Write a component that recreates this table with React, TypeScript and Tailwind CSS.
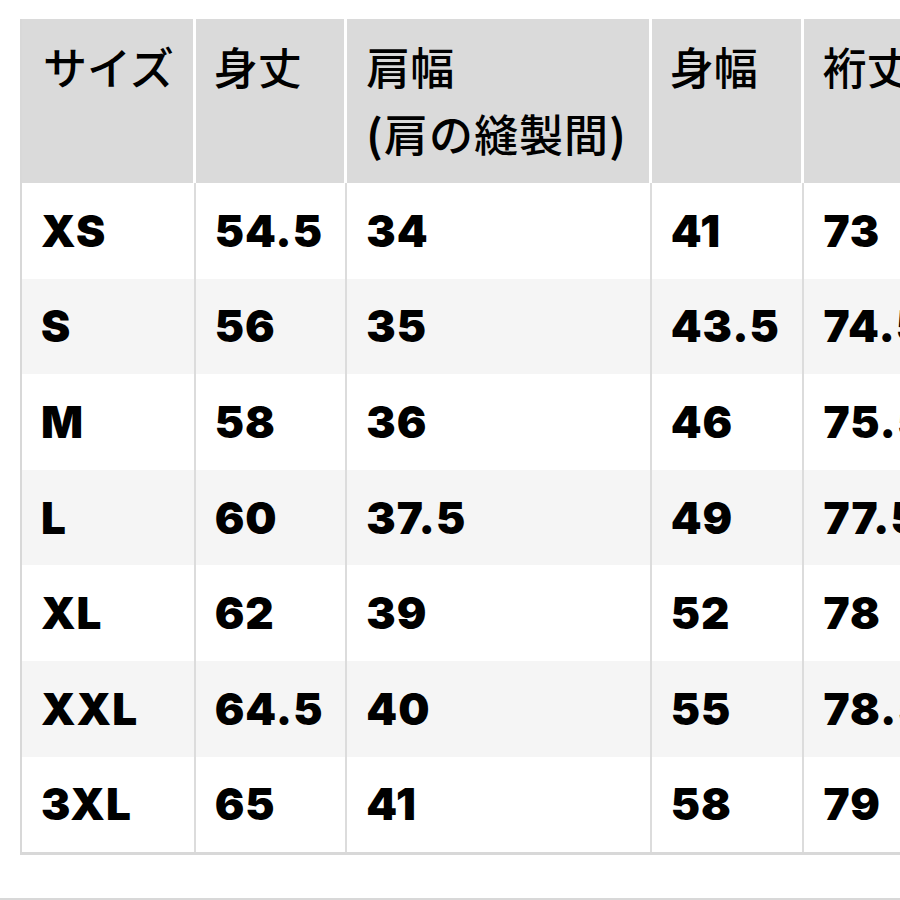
const rows = [
  ["XS", "54.5", "34", "41", "73"],
  ["S", "56", "35", "43.5", "74.5"],
  ["M", "58", "36", "46", "75.5"],
  ["L", "60", "37.5", "49", "77.5"],
  ["XL", "62", "39", "52", "78"],
  ["XXL", "64.5", "40", "55", "78.5"],
  ["3XL", "65", "41", "58", "79"],
];

const widths = ["w-[174px]", "w-[152px]", "w-[305px]", "w-[153px]", "w-[200px]"];

export default function App() {
  return (
    <div className="w-[900px] h-[900px] bg-white overflow-hidden flex flex-col">
      <div className="pl-[20px] pt-[19px] flex-1">
        <div className="flex flex-col w-[984px] border-l-2 border-b-[3px] border-[#d8d8d8]">
          <div className="flex h-[164px] font-['Noto_Sans_CJK_JP',sans-serif] font-medium text-[44px] leading-[67px] text-black">
            <div className={`${widths[0]} bg-[#dadada] border-r-[3px] border-white pl-[21px] pt-[14px]`}>サイズ</div>
            <div className={`${widths[1]} bg-[#dadada] border-r-[3px] border-white pl-[18px] pt-[14px]`}>身丈</div>
            <div className={`${widths[2]} bg-[#dadada] border-r-[3px] border-white pl-[19px] pt-[14px]`}>
              <div>肩幅</div>
              <div className="tracking-[1px]">
                <span className="font-bold">(</span>肩の縫製間<span className="font-bold">)</span>
              </div>
            </div>
            <div className={`${widths[3]} bg-[#dadada] border-r-[3px] border-white pl-[18px] pt-[14px]`}>身幅</div>
            <div className={`${widths[4]} bg-[#dadada] pl-[18px] pt-[14px]`}>裄丈</div>
          </div>
          {rows.map((r, i) => (
            <div
              key={r[0]}
              className={`flex h-[95.6px] ${i % 2 === 1 ? "bg-[#f5f5f5]" : "bg-white"}`}
            >
              {r.map((c, j) => (
                <div
                  key={j}
                  className={`${widths[j]} ${j < 4 ? "border-r-2 border-[#dcdcdc]" : ""} flex items-center pl-[19px] font-['Inter',sans-serif] font-black text-[44px] tracking-[1px] text-black`}
                >
                  {c}
                </div>
              ))}
            </div>
          ))}
        </div>
      </div>
      <div className="h-[2px] bg-[#d8d8d8]" />
    </div>
  );
}
